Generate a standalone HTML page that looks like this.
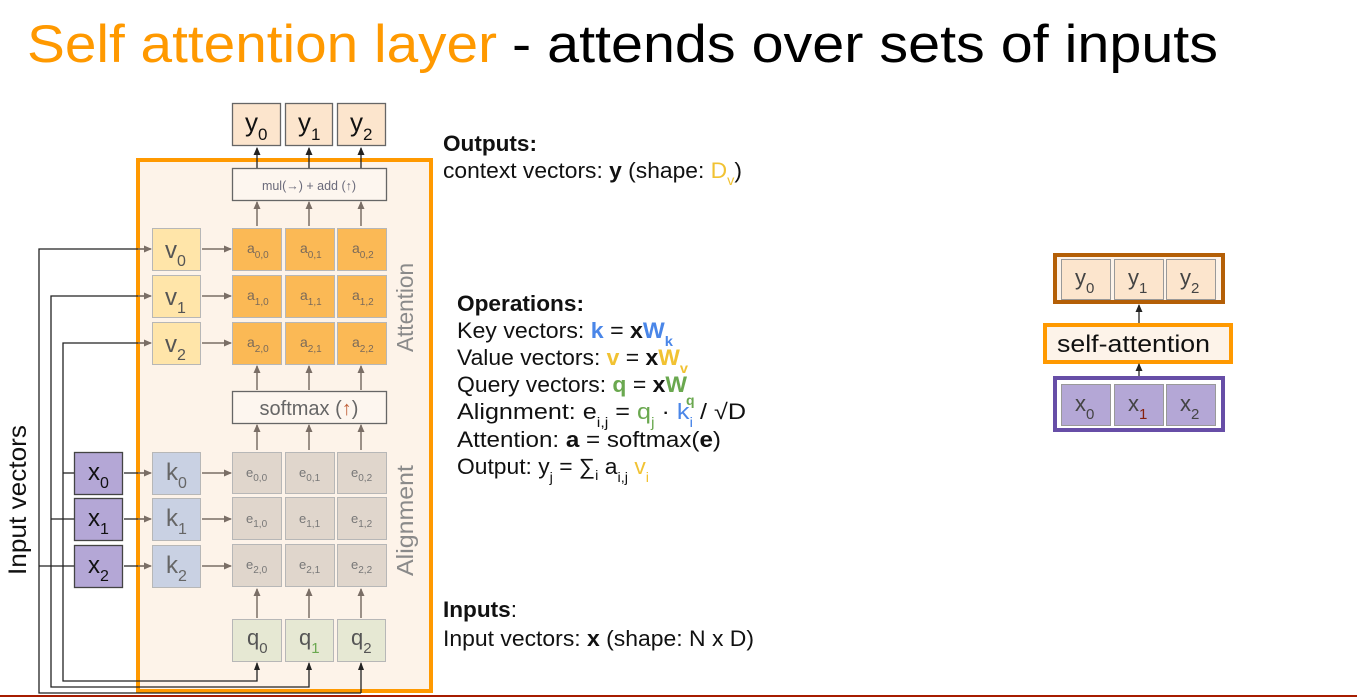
<!DOCTYPE html>
<html><head><meta charset="utf-8"><style>
html,body{margin:0;padding:0;background:#fff;}
svg{display:block;font-family:"Liberation Sans",Arial,sans-serif;}
</style></head><body>
<svg width="1357" height="697" viewBox="0 0 1357 697" xmlns="http://www.w3.org/2000/svg">
<defs>
<marker id="ag" markerWidth="8" markerHeight="8" refX="7" refY="4" orient="auto" markerUnits="userSpaceOnUse"><path d="M0,0.5 L8,4 L0,7.5 Z" fill="#7a6e66"/></marker>
<marker id="ak" markerWidth="8" markerHeight="8" refX="7" refY="4" orient="auto" markerUnits="userSpaceOnUse"><path d="M0,0.5 L8,4 L0,7.5 Z" fill="#222"/></marker>
</defs>
<text x="27" y="62" font-size="53" textLength="470" lengthAdjust="spacingAndGlyphs" fill="#ff9900">Self attention layer</text>
<text x="512" y="62" font-size="53" textLength="706" lengthAdjust="spacingAndGlyphs" fill="#000">- attends over sets of inputs</text>

<rect x="138" y="160" width="293" height="531" fill="#fdf3e9" stroke="#ff9900" stroke-width="4"/>

<g stroke="#222" stroke-width="1.3" fill="none">
<path d="M150,249 H39 V693 H361"/>
<path d="M150,296 H51 V687 H309 V663"/>
<path d="M150,343 H63 V681 H257 V663"/>
<path d="M63,473 H74"/><path d="M51,519 H74"/><path d="M39,566 H74"/>
<path d="M124,473 H148"/><path d="M124,519 H148"/><path d="M124,566 H148"/>
<path d="M361,693 V663"/>
</g>
<g fill="#222">
<path d="M257,662 l-3,8 h6z"/><path d="M309,662 l-3,8 h6z"/><path d="M361,662 l-3,8 h6z"/>
</g>
<g stroke="#7a6e66" stroke-width="1.5" marker-end="url(#ag)">
<line x1="138" y1="249" x2="151" y2="249"/><line x1="138" y1="296" x2="151" y2="296"/><line x1="138" y1="343" x2="151" y2="343"/>
<line x1="138" y1="473" x2="151" y2="473"/><line x1="138" y1="519" x2="151" y2="519"/><line x1="138" y1="566" x2="151" y2="566"/>
<line x1="202" y1="249" x2="231" y2="249"/><line x1="202" y1="296" x2="231" y2="296"/><line x1="202" y1="343" x2="231" y2="343"/>
<line x1="202" y1="473" x2="231" y2="473"/><line x1="202" y1="519" x2="231" y2="519"/><line x1="202" y1="566" x2="231" y2="566"/>
<line x1="257" y1="226" x2="257" y2="202"/><line x1="309" y1="226" x2="309" y2="202"/><line x1="361" y1="226" x2="361" y2="202"/>
<line x1="257" y1="390" x2="257" y2="366"/><line x1="309" y1="390" x2="309" y2="366"/><line x1="361" y1="390" x2="361" y2="366"/>
<line x1="257" y1="450" x2="257" y2="425"/><line x1="309" y1="450" x2="309" y2="425"/><line x1="361" y1="450" x2="361" y2="425"/>
<line x1="257" y1="618" x2="257" y2="589"/><line x1="309" y1="618" x2="309" y2="589"/><line x1="361" y1="618" x2="361" y2="589"/>
</g>
<g stroke="#222" stroke-width="1.3" marker-end="url(#ak)">
<line x1="257" y1="168" x2="257" y2="148"/><line x1="309" y1="168" x2="309" y2="148"/><line x1="361" y1="168" x2="361" y2="148"/>
</g>

<g fill="#fce5cd" stroke="#666" stroke-width="1.3">
<rect x="232.5" y="103.5" width="48" height="42"/><rect x="285.5" y="103.5" width="47" height="42"/><rect x="337.5" y="103.5" width="48" height="42"/>
</g>
<g font-size="26" fill="#111">
<text x="245" y="131">y<tspan font-size="17" dy="9">0</tspan></text>
<text x="298" y="131">y<tspan font-size="17" dy="9">1</tspan></text>
<text x="350" y="131">y<tspan font-size="17" dy="9">2</tspan></text>
</g>
<rect x="232.5" y="168.5" width="154" height="32" fill="#fdf6ef" stroke="#666" stroke-width="1.3"/>
<text x="309" y="190" font-size="12.5" fill="#6a6a7a" text-anchor="middle">mul(→) + add (↑)</text>

<g fill="#ffe5a9" stroke="#b7b7b7" stroke-width="1">
<rect x="152.5" y="228.5" width="48" height="42"/><rect x="152.5" y="275.5" width="48" height="42"/><rect x="152.5" y="322.5" width="48" height="42"/>
</g>
<g font-size="24" fill="#555">
<text x="165" y="258">v<tspan font-size="16" dy="8">0</tspan></text>
<text x="165" y="305">v<tspan font-size="16" dy="8">1</tspan></text>
<text x="165" y="352">v<tspan font-size="16" dy="8">2</tspan></text>
</g>
<g fill="#fbb955" stroke="#b7b7b7" stroke-width="1">
<rect x="232.5" y="228.5" width="49" height="42"/><rect x="285.5" y="228.5" width="49" height="42"/><rect x="337.5" y="228.5" width="49" height="42"/>
<rect x="232.5" y="275.5" width="49" height="42"/><rect x="285.5" y="275.5" width="49" height="42"/><rect x="337.5" y="275.5" width="49" height="42"/>
<rect x="232.5" y="322.5" width="49" height="42"/><rect x="285.5" y="322.5" width="49" height="42"/><rect x="337.5" y="322.5" width="49" height="42"/>
</g>
<g font-size="14" fill="#7a6a5a">
<text x="247" y="253">a<tspan font-size="10" dy="5">0,0</tspan></text>
<text x="300" y="253">a<tspan font-size="10" dy="5">0,1</tspan></text>
<text x="352" y="253">a<tspan font-size="10" dy="5">0,2</tspan></text>
<text x="247" y="300">a<tspan font-size="10" dy="5">1,0</tspan></text>
<text x="300" y="300">a<tspan font-size="10" dy="5">1,1</tspan></text>
<text x="352" y="300">a<tspan font-size="10" dy="5">1,2</tspan></text>
<text x="247" y="347">a<tspan font-size="10" dy="5">2,0</tspan></text>
<text x="300" y="347">a<tspan font-size="10" dy="5">2,1</tspan></text>
<text x="352" y="347">a<tspan font-size="10" dy="5">2,2</tspan></text>
</g>
<rect x="232.5" y="391.5" width="154" height="32" fill="#fdf6ef" stroke="#666" stroke-width="1.3"/>
<text x="309" y="415" font-size="20" fill="#666" text-anchor="middle">softmax (<tspan fill="#c0603a">↑</tspan>)</text>

<g fill="#b4a7d6" stroke="#444" stroke-width="1.3">
<rect x="74.5" y="452.5" width="48" height="42"/><rect x="74.5" y="498.5" width="48" height="42"/><rect x="74.5" y="545.5" width="48" height="42"/>
</g>
<g font-size="24" fill="#111">
<text x="88" y="480">x<tspan font-size="16" dy="8">0</tspan></text>
<text x="88" y="526">x<tspan font-size="16" dy="8">1</tspan></text>
<text x="88" y="573">x<tspan font-size="16" dy="8">2</tspan></text>
</g>
<g fill="#c9d1e3" stroke="#b7b7b7" stroke-width="1">
<rect x="152.5" y="452.5" width="48" height="42"/><rect x="152.5" y="498.5" width="48" height="42"/><rect x="152.5" y="545.5" width="48" height="42"/>
</g>
<g font-size="24" fill="#666">
<text x="166" y="480">k<tspan font-size="16" dy="8">0</tspan></text>
<text x="166" y="526">k<tspan font-size="16" dy="8">1</tspan></text>
<text x="166" y="573">k<tspan font-size="16" dy="8">2</tspan></text>
</g>
<g fill="#e0d6cc" stroke="#b7b7b7" stroke-width="1">
<rect x="232.5" y="452.5" width="49" height="41"/><rect x="285.5" y="452.5" width="49" height="41"/><rect x="337.5" y="452.5" width="49" height="41"/>
<rect x="232.5" y="497.5" width="49" height="42"/><rect x="285.5" y="497.5" width="49" height="42"/><rect x="337.5" y="497.5" width="49" height="42"/>
<rect x="232.5" y="544.5" width="49" height="42"/><rect x="285.5" y="544.5" width="49" height="42"/><rect x="337.5" y="544.5" width="49" height="42"/>
</g>
<g font-size="13" fill="#777">
<text x="246" y="477">e<tspan font-size="10" dy="4">0,0</tspan></text>
<text x="299" y="477">e<tspan font-size="10" dy="4">0,1</tspan></text>
<text x="351" y="477">e<tspan font-size="10" dy="4">0,2</tspan></text>
<text x="246" y="523">e<tspan font-size="10" dy="4">1,0</tspan></text>
<text x="299" y="523">e<tspan font-size="10" dy="4">1,1</tspan></text>
<text x="351" y="523">e<tspan font-size="10" dy="4">1,2</tspan></text>
<text x="246" y="569">e<tspan font-size="10" dy="4">2,0</tspan></text>
<text x="299" y="569">e<tspan font-size="10" dy="4">2,1</tspan></text>
<text x="351" y="569">e<tspan font-size="10" dy="4">2,2</tspan></text>
</g>
<g fill="#e6e8d3" stroke="#b7b7b7" stroke-width="1">
<rect x="232.5" y="619.5" width="49" height="42"/><rect x="285.5" y="619.5" width="48" height="42"/><rect x="337.5" y="619.5" width="48" height="42"/>
</g>
<g font-size="22" fill="#555">
<text x="247" y="645">q<tspan font-size="15" dy="8">0</tspan></text>
<text x="299" y="645">q<tspan font-size="15" dy="8" fill="#6aa84f">1</tspan></text>
<text x="351" y="645">q<tspan font-size="15" dy="8">2</tspan></text>
</g>

<text transform="translate(413,352) rotate(-90)" font-size="23" fill="#8a8a8a" textLength="89" lengthAdjust="spacingAndGlyphs">Attention</text>
<text transform="translate(413,576) rotate(-90)" font-size="23" fill="#8a8a8a" textLength="111" lengthAdjust="spacingAndGlyphs">Alignment</text>
<text transform="translate(26,575) rotate(-90)" font-size="25" fill="#111" textLength="150" lengthAdjust="spacingAndGlyphs">Input vectors</text>

<g font-size="22" fill="#111">
<text x="443" y="151" font-weight="bold" textLength="94" lengthAdjust="spacingAndGlyphs">Outputs:</text>
<text x="443" y="178" textLength="299" lengthAdjust="spacingAndGlyphs">context vectors: <tspan font-weight="bold">y</tspan> (shape: <tspan fill="#f1c232">D<tspan font-size="14" dy="7">v</tspan></tspan><tspan dy="-7">)</tspan></text>

<text x="457" y="311" font-weight="bold" textLength="127" lengthAdjust="spacingAndGlyphs">Operations:</text>
<text x="457" y="338" textLength="216" lengthAdjust="spacingAndGlyphs">Key vectors: <tspan font-weight="bold" fill="#4a86e8">k</tspan> = <tspan font-weight="bold">x</tspan><tspan font-weight="bold" fill="#4a86e8">W<tspan font-size="14" dy="8">k</tspan></tspan></text>
<text x="457" y="365" textLength="231" lengthAdjust="spacingAndGlyphs">Value vectors: <tspan font-weight="bold" fill="#f1c232">v</tspan> = <tspan font-weight="bold">x</tspan><tspan font-weight="bold" fill="#f1c232">W<tspan font-size="14" dy="8">v</tspan></tspan></text>
<text x="457" y="392" textLength="230" lengthAdjust="spacingAndGlyphs">Query vectors: <tspan font-weight="bold" fill="#6aa84f">q</tspan> = <tspan font-weight="bold">x</tspan><tspan font-weight="bold" fill="#6aa84f">W</tspan></text>
<text x="686" y="405" font-size="14" font-weight="bold" fill="#6aa84f">q</text>
<text x="457" y="419" textLength="289" lengthAdjust="spacingAndGlyphs">Alignment: e<tspan font-size="14" dy="8">i,j</tspan><tspan dy="-8"> = </tspan><tspan fill="#6aa84f">q<tspan font-size="14" dy="8">j</tspan></tspan><tspan dy="-8"> · </tspan><tspan fill="#4a86e8">k<tspan font-size="14" dy="8">i</tspan></tspan><tspan dy="-8"> / √D</tspan></text>
<text x="457" y="447" textLength="264" lengthAdjust="spacingAndGlyphs">Attention: <tspan font-weight="bold">a</tspan> = softmax(<tspan font-weight="bold">e</tspan>)</text>
<text x="457" y="474" textLength="192" lengthAdjust="spacingAndGlyphs">Output: y<tspan font-size="14" dy="8">j</tspan><tspan dy="-8"> = ∑</tspan><tspan font-size="14" dy="6">i</tspan><tspan dy="-6"> a</tspan><tspan font-size="14" dy="8">i,j</tspan><tspan dy="-8" fill="#f1c232"> v</tspan><tspan font-size="14" dy="8" fill="#f1c232">i</tspan></text>

<text x="443" y="617" textLength="74" lengthAdjust="spacingAndGlyphs"><tspan font-weight="bold">Inputs</tspan>:</text>
<text x="443" y="646" textLength="311" lengthAdjust="spacingAndGlyphs">Input vectors: <tspan font-weight="bold">x</tspan> (shape: N x D)</text>
</g>

<rect x="1055" y="255" width="168" height="47" fill="#fdf3e9" stroke="#b45f06" stroke-width="4"/>
<g fill="#fce5cd" stroke="#999" stroke-width="1">
<rect x="1061.5" y="259.5" width="49" height="40"/><rect x="1114.5" y="259.5" width="49" height="40"/><rect x="1166.5" y="259.5" width="49" height="40"/>
</g>
<g font-size="22" fill="#444">
<text x="1075" y="285">y<tspan font-size="15" dy="8">0</tspan></text>
<text x="1128" y="285">y<tspan font-size="15" dy="8">1</tspan></text>
<text x="1180" y="285">y<tspan font-size="15" dy="8">2</tspan></text>
</g>
<rect x="1045" y="325" width="186" height="37" fill="#fdf3e9" stroke="#ff9900" stroke-width="4"/>
<text x="1057" y="352" font-size="24" fill="#111" textLength="153" lengthAdjust="spacingAndGlyphs">self-attention</text>
<rect x="1055" y="378" width="168" height="52" fill="#fff" stroke="#674ea7" stroke-width="4"/>
<g fill="#b4a7d6" stroke="#999" stroke-width="1">
<rect x="1061.5" y="384.5" width="49" height="41"/><rect x="1114.5" y="384.5" width="49" height="41"/><rect x="1166.5" y="384.5" width="49" height="41"/>
</g>
<g font-size="22" fill="#444">
<text x="1075" y="411">x<tspan font-size="15" dy="8">0</tspan></text>
<text x="1128" y="411">x<tspan font-size="15" dy="8" fill="#85200c">1</tspan></text>
<text x="1180" y="411">x<tspan font-size="15" dy="8">2</tspan></text>
</g>
<g stroke="#222" stroke-width="1.3" marker-end="url(#ak)">
<line x1="1139" y1="323" x2="1139" y2="305"/><line x1="1139" y1="376" x2="1139" y2="364"/>
</g>

<rect x="0" y="695" width="1357" height="2" fill="#a61c00"/>
</svg>
</body></html>
